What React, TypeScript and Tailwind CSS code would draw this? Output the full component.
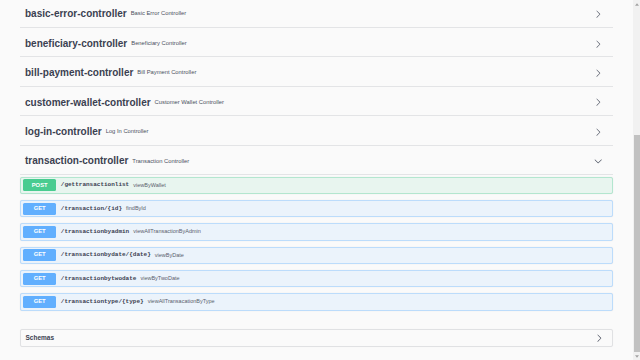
import React from "react";

const SANS = { fontFamily: '"Liberation Sans", Arial, sans-serif' };
const MONO = { fontFamily: '"Liberation Mono", "Courier New", monospace' };

const tags: [string, string][] = [
  ["basic-error-controller", "Basic Error Controller"],
  ["beneficiary-controller", "Beneficiary Controller"],
  ["bill-payment-controller", "Bill Payment Controller"],
  ["customer-wallet-controller", "Customer Wallet Controller"],
  ["log-in-controller", "Log In Controller"],
];

const ops: [string, string, string][] = [
  ["POST", "/gettransactionlist", "viewByWallet"],
  ["GET", "/transaction/{id}", "findById"],
  ["GET", "/transactionbyadmin", "viewAllTransactionByAdmin"],
  ["GET", "/transactionbydate/{date}", "viewByDate"],
  ["GET", "/transactionbytwodate", "viewByTwoDate"],
  ["GET", "/transactiontype/{type}", "viewAllTransacationByType"],
];

function Arrow({ down = false, color = "#4b5160" }: { down?: boolean; color?: string }) {
  return (
    <svg
      viewBox="0 0 20 20"
      className="h-[8.33px] w-[8.33px] shrink-0"
      style={{ transform: down ? "rotate(90deg)" : undefined }}
    >
      <path
        fill={color}
        d="M13.25 10L6.109 2.58a.697.697 0 0 1 0-.979.68.68 0 0 1 .969 0l7.83 7.908a.697.697 0 0 1 0 .979l-7.83 7.908a.68.68 0 0 1-.969 0 .697.697 0 0 1 0-.979L13.25 10z"
      />
    </svg>
  );
}

function TagRow({ name, desc, open = false }: { name: string; desc: string; open?: boolean }) {
  return (
    <div className="mb-[1.45px] flex h-[28px] items-center border-b border-[#e3e4e6] pl-[5px] pr-[11px] pt-[1.5px]">
      <span className="text-[10px] font-bold leading-none text-[#3b4151]">{name}</span>
      <span className="ml-[4px] text-[5.8px] leading-none text-[#4a505e]">{desc}</span>
      <div className="flex-1" />
      <Arrow down={open} />
    </div>
  );
}

function Op({ method, path, desc }: { method: string; path: string; desc: string }) {
  const post = method === "POST";
  return (
    <div
      className={
        post
          ? "flex h-[17.5px] items-center rounded-[2px] border border-[#b3e6cf] bg-[#e8f5ef] px-[2px] shadow-[0_0_1px_rgba(0,0,0,0.12)]"
          : "flex h-[17.5px] items-center rounded-[2px] border border-[#bcdcfb] bg-[#ebf3fb] px-[2px] shadow-[0_0_1px_rgba(0,0,0,0.12)]"
      }
    >
      <div
        className={
          post
            ? "flex h-[12px] w-[33.3px] shrink-0 items-center justify-center rounded-[1.5px] bg-[#49cc90] text-[5.8px] font-bold leading-none text-white"
            : "flex h-[12px] w-[33.3px] shrink-0 items-center justify-center rounded-[1.5px] bg-[#61affe] text-[5.8px] font-bold leading-none text-white"
        }
      >
        {method}
      </div>
      <span className="ml-[4.5px] text-[6px] font-bold leading-none text-[#3b4151]" style={MONO}>
        {path}
      </span>
      <span className="ml-[4px] text-[5.5px] leading-none text-[#5a606c]">{desc}</span>
    </div>
  );
}

function Scrollbar() {
  return (
    <div className="flex h-[360px] w-[7px] shrink-0 flex-col bg-[#f1f1f1]">
      <div className="flex h-[8px] items-center justify-center">
        <svg viewBox="0 0 6 4" className="h-[3px] w-[4px]">
          <polygon points="3,0 6,4 0,4" fill="#a3a3a3" />
        </svg>
      </div>
      <div className="h-[127px]" />
      <div className="mx-auto h-[217px] w-[6px] bg-[#c1c1c1]" />
      <div className="flex flex-1 items-center justify-center">
        <svg viewBox="0 0 6 4" className="h-[3px] w-[4px]">
          <polygon points="0,0 6,0 3,4" fill="#a3a3a3" />
        </svg>
      </div>
    </div>
  );
}

export default function App() {
  return (
    <div className="flex h-[360px] w-[640px] overflow-hidden bg-[#fafafa]" style={SANS}>
      <div className="min-w-0 flex-1 px-[20px]">
        {tags.map(([n, d]) => (
          <TagRow key={n} name={n} desc={d} />
        ))}
        <TagRow name="transaction-controller" desc="Transaction Controller" open />
        <div className="mt-[1.5px] flex flex-col gap-[5.8px]">
          {ops.map(([m, p, d]) => (
            <Op key={p} method={m} path={p} desc={d} />
          ))}
        </div>
        <div className="mt-[18.3px] flex h-[17.7px] items-center rounded-[2px] border border-[#e0e1e3] pl-[4.5px] pr-[8.3px] shadow-[0_0_1px_rgba(0,0,0,0.06)]">
          <span className="text-[6.5px] font-bold leading-none text-[#3b4151]">Schemas</span>
          <div className="flex-1" />
          <Arrow color="#3b4151" />
        </div>
      </div>
      <Scrollbar />
    </div>
  );
}
